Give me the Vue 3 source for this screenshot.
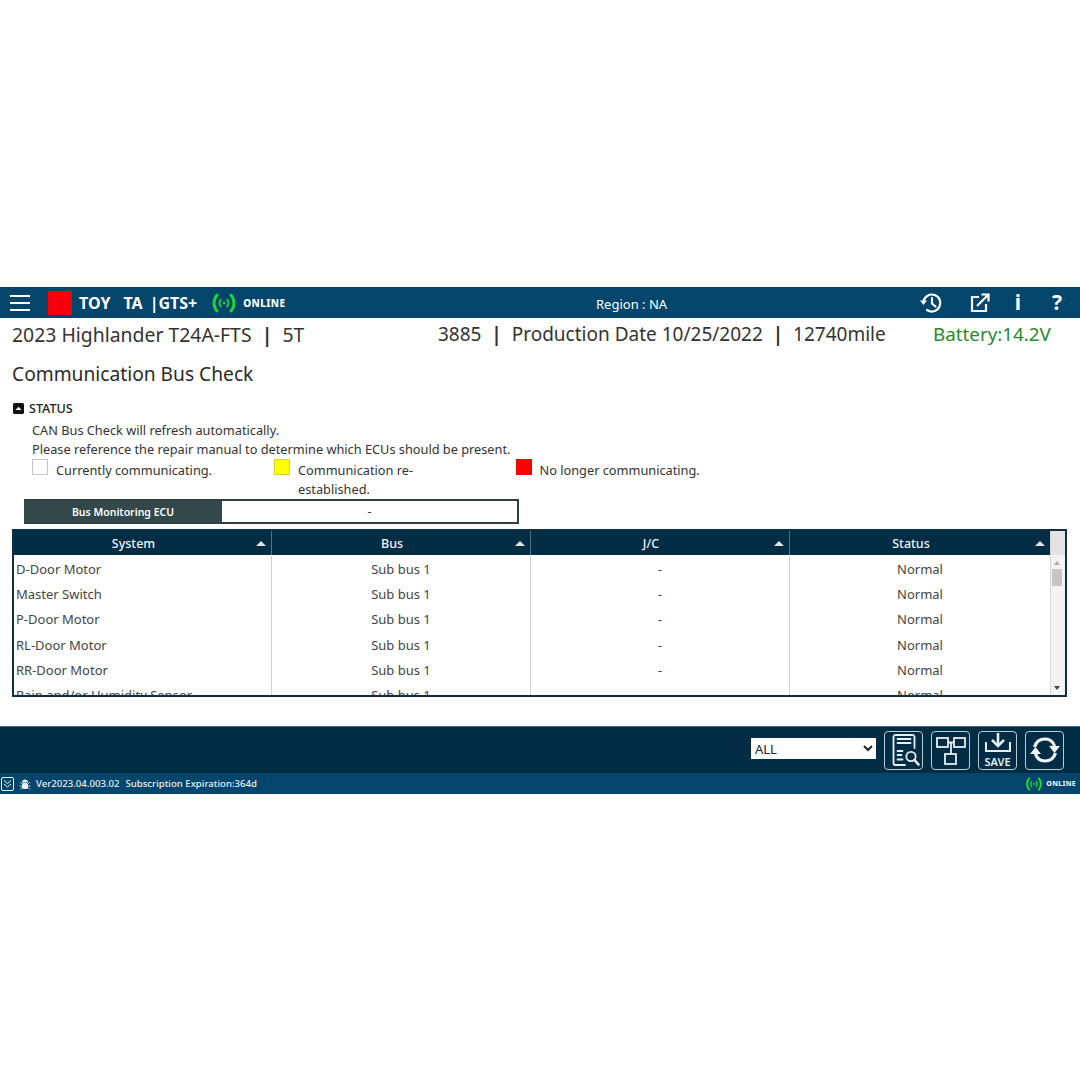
<template>
  <div class="page">
    <header class="topbar">
      <button class="menu-btn" aria-label="Menu"><span></span><span></span><span></span></button>
      <div class="logo-box"></div>
      <div class="brand"><span>TOY</span><span class="brand-gap">TA</span><span class="brand-sep">|GTS+</span></div>
      <svg class="signal" width="26" height="20" viewBox="0 0 26 20" fill="none" stroke="#1fd13a" stroke-width="3" stroke-linecap="round">
        <path d="M6 2C2 6.500 2 13.500 6 18" />
        <path d="M20 2c4 4.500 4 11.500 0 16" />
        <path d="M9.800 6.500c-1.500 2-1.500 5 0 7" stroke-width="1.800" />
        <path d="M16.200 6.500c1.500 2 1.500 5 0 7" stroke-width="1.800" />
        <circle cx="13" cy="10" r="1.400" fill="#1fd13a" stroke="none" />
      </svg>
      <span class="online">ONLINE</span>
      <div class="region">Region : NA</div>
      <div class="top-icons">
        <svg width="24" height="22" viewBox="0 0 24 22" fill="none" stroke="#fff" stroke-width="2.200" stroke-linecap="round">
          <path d="M4.500 9.500A8.500 8.500 0 1 1 8 18" />
          <path d="M1 8.500h7l-3.500 4.500z" fill="#fff" stroke="none" />
          <path d="M13 6v5.500l3.500 3" />
        </svg>
        <svg class="icon-external" width="20" height="20" viewBox="0 0 20 20" fill="none" stroke="#fff" stroke-width="2.200">
          <path d="M9 4H2v14h14v-7" />
          <path d="M7 13 18 2M11.500 1.500h7v7" />
        </svg>
        <span class="glyph-i">i</span>
        <span class="glyph-q">?</span>
      </div>
    </header>

    <div class="vehicle-row">
      <span class="vehicle">2023 Highlander T24A-FTS&nbsp; <b>|</b> &nbsp;5T</span>
      <span class="production">3885&nbsp; <b>|</b> &nbsp;Production Date 10/25/2022&nbsp; <b>|</b> &nbsp;12740mile</span>
      <span class="battery">Battery:14.2V</span>
    </div>

    <h1 class="title">Communication Bus Check</h1>

    <section class="status">
      <div class="status-head">
        <svg width="11" height="11" viewBox="0 0 11 11">
          <rect width="11" height="11" rx="1.500" fill="#111" />
          <path d="M2.500 7 5.500 3.800 8.500 7z" fill="#fff" />
        </svg>
        <span>STATUS</span>
      </div>
      <div class="status-text">
        <p>CAN Bus Check will refresh automatically.</p>
        <p>Please reference the repair manual to determine which ECUs should be present.</p>
      </div>
      <div class="legend">
        <div v-for="item in legend" :key="item.label" class="legend-item">
          <span class="swatch" :class="item.cls"></span>
          <span class="legend-label">{{ item.label }}</span>
        </div>
      </div>
      <div class="monitor">
        <div class="monitor-label">Bus Monitoring ECU</div>
        <div class="monitor-value">-</div>
      </div>
    </section>

    <div class="table-wrap">
      <div class="table-main">
        <div class="thead">
          <div v-for="col in columns" :key="col" class="th">
            <span>{{ col }}</span>
            <i class="sort"></i>
          </div>
        </div>
        <div class="tbody">
          <div v-for="row in rows" :key="row" class="tr">
            <div class="td td-system">{{ row }}</div>
            <div class="td">Sub bus 1</div>
            <div class="td">-</div>
            <div class="td">Normal</div>
          </div>
        </div>
      </div>
      <div class="scrollbar">
        <div class="scroll-corner"></div>
        <div class="scroll-track">
          <i class="arrow up"></i>
          <div class="thumb"></div>
          <i class="arrow down"></i>
        </div>
      </div>
    </div>

    <div class="toolbar">
      <select class="filter">
        <option>ALL</option>
      </select>
      <button class="tool-btn" aria-label="Search report">
        <svg width="32" height="34" viewBox="0 0 32 34" fill="none" stroke="#e6eff3" stroke-width="1.800" stroke-linecap="round">
          <path d="M26.500 15V4a2 2 0 0 0-2-2h-17a2 2 0 0 0-2 2v26a2 2 0 0 0 2 2H17" />
          <path d="M9.500 6h13M9.500 10h13M9.500 18h5M9.500 22h4M9.500 26.500h5" />
          <circle cx="23" cy="23.500" r="4.700" />
          <path d="m26.500 27 4 4.500" stroke-width="2.600" />
        </svg>
      </button>
      <button class="tool-btn" aria-label="Diagram">
        <svg width="34" height="32" viewBox="0 0 34 32" fill="none" stroke="#e6eff3" stroke-width="1.800">
          <rect x="3" y="4" width="11" height="9" />
          <rect x="20" y="4" width="11" height="9" />
          <rect x="11" y="20" width="11" height="10" />
          <path d="M14 8.500h6M17 8.500V20" />
        </svg>
      </button>
      <button class="tool-btn save" aria-label="Save">
        <svg width="28" height="21" viewBox="0 0 28 21" fill="none" stroke="#e6eff3" stroke-width="2">
          <path d="M14 0v12" stroke-width="2.600" />
          <path d="m8 7 6 6 6-6" stroke-width="2.600" />
          <path d="M2 9v9h24V9" />
        </svg>
        <span>SAVE</span>
      </button>
      <button class="tool-btn" aria-label="Refresh">
        <svg width="34" height="32" viewBox="0 0 34 32" fill="none" stroke="#f2f7f9" stroke-width="3.200">
          <path d="M6.500 13C8 8 12 5 17 5c4.500 0 8 2.500 9.500 7" />
          <path d="M27.500 19C26 24 22 27 17 27c-4.500 0-8-2.500-9.500-7" />
          <path d="M32 12H21l5.500 7z" fill="#f2f7f9" stroke="none" />
          <path d="M2 20h11l-5.500-7z" fill="#f2f7f9" stroke="none" />
        </svg>
      </button>
    </div>

    <footer class="statusbar">
      <div class="foot-left">
        <span class="chevron-box">
          <svg width="13" height="14" viewBox="0 0 13 14" fill="none" stroke="#dff" stroke-width="1">
            <rect x=".5" y=".5" width="12" height="13" rx="1.500" />
            <path d="m3 3.500 3.500 3 3.500-3M3 7l3.500 3L10 7" />
          </svg>
        </span>
        <svg class="bug" width="12" height="12" viewBox="0 0 12 12" fill="#e8f2f6">
          <path d="M3 4.500a3 3 0 0 1 6 0z" />
          <rect x="3" y="5" width="6" height="6" rx="1.500" />
          <path d="M1 4l2 2M11 4 9 6M.5 8H3M11.500 8H9M1 11.500l2-2M11 11.500l-2-2" stroke="#e8f2f6" stroke-width=".8" />
        </svg>
        <span class="version">Ver2023.04.003.02</span>
        <span class="subscription">Subscription Expiration:364d</span>
      </div>
      <div class="foot-right">
        <svg width="18" height="14" viewBox="0 0 26 20" fill="none" stroke="#1fd13a" stroke-width="3" stroke-linecap="round">
          <path d="M6 2C2 6.500 2 13.500 6 18" />
          <path d="M20 2c4 4.500 4 11.500 0 16" />
          <path d="M9.800 6.500c-1.500 2-1.500 5 0 7" stroke-width="2" />
          <path d="M16.200 6.500c1.500 2 1.500 5 0 7" stroke-width="2" />
          <circle cx="13" cy="10" r="1.400" fill="#1fd13a" stroke="none" />
        </svg>
        <span>ONLINE</span>
      </div>
    </footer>
  </div>
</template>

<script setup>
const legend = [
  { label: 'Currently communicating.', cls: 'swatch--white' },
  { label: 'Communication re-established.', cls: 'swatch--yellow' },
  { label: 'No longer communicating.', cls: 'swatch--red' },
];

const columns = ['System', 'Bus', 'J/C', 'Status'];

const rows = [
  'D-Door Motor',
  'Master Switch',
  'P-Door Motor',
  'RL-Door Motor',
  'RR-Door Motor',
  'Rain and/or Humidity Sensor',
];
</script>

<style>
html,
body {
  margin: 0;
  background: #fff;
}
</style>

<style scoped>
.page {
  width: 1080px;
  height: 1080px;
  padding-top: 287px;
  box-sizing: border-box;
  font-family: "Noto Sans", "Open Sans", sans-serif;
  color: #333;
  overflow: hidden;
}

.topbar {
  height: 31px;
  background: #04456b;
  display: flex;
  align-items: center;
  color: #fff;
  position: relative;
}

.menu-btn {
  width: 20px;
  margin-left: 10px;
  padding: 0;
  border: 0;
  background: none;
  display: flex;
  flex-direction: column;
  gap: 5px;
}

.menu-btn span {
  height: 2px;
  background: #fff;
}

.logo-box {
  width: 24px;
  height: 24px;
  margin-left: 18px;
  background: #f5000a;
}

.brand {
  margin-left: 7px;
  font-size: 16px;
  font-weight: 700;
  display: flex;
  white-space: nowrap;
}

.brand-gap {
  margin-left: 13px;
}

.brand-sep {
  margin-left: 7px;
}

.signal {
  margin-left: 14px;
}

.online {
  margin-left: 6px;
  font-size: 10px;
  font-weight: 800;
  letter-spacing: 0.4px;
}

.region {
  position: absolute;
  left: 596px;
  top: 8px;
  font-size: 13px;
}

.top-icons {
  margin-left: auto;
  padding-right: 18px;
  display: flex;
  align-items: center;
}

.icon-external {
  margin-left: 27px;
}

.glyph-i,
.glyph-q {
  font-size: 21px;
  font-weight: 700;
  line-height: 1;
}

.glyph-i {
  margin-left: 25px;
}

.glyph-q {
  margin-left: 31px;
}

.vehicle-row {
  height: 32px;
  padding-left: 12px;
  display: flex;
  align-items: center;
  font-size: 19.400px;
  white-space: nowrap;
}

.vehicle {
  width: 426px;
}

.production {
  width: 495px;
  font-size: 19px;
}

.vehicle-row b {
  font-weight: 700;
}

.battery {
  font-size: 18.800px;
  color: #2a8a2a;
}

.title {
  margin: 10px 0 0 12px;
  font-size: 19.200px;
  font-weight: 400;
  line-height: 28px;
  color: #2b2b2b;
}

.status {
  margin-top: 11px;
}

.status-head {
  margin-left: 13px;
  display: flex;
  align-items: center;
  gap: 5px;
  height: 18px;
  font-size: 12.600px;
  font-weight: 500;
  color: #222;
}

.status-text {
  margin: 4px 0 0 32px;
  font-size: 12.750px;
  line-height: 19px;
}

.status-text p {
  margin: 0;
}

.legend {
  margin-left: 32px;
  display: grid;
  grid-template-columns: 242px 241.500px 300px;
  font-size: 12.750px;
  line-height: 19px;
}

.legend-item {
  display: flex;
  gap: 8px;
}

.legend-item .legend-label {
  max-width: 140px;
  padding-top: 2px;
}

.legend-item:first-child .legend-label,
.legend-item:last-child .legend-label {
  max-width: none;
}

.swatch {
  width: 16px;
  height: 16px;
  box-sizing: border-box;
  flex-shrink: 0;
}

.swatch--white {
  border: 1px solid #c4c4c4;
  background: #fff;
}

.swatch--yellow {
  border: 1px solid #d6d62a;
  background: #ffff00;
}

.swatch--red {
  background: #ff0000;
}

.monitor {
  margin-left: 24px;
  width: 495px;
  height: 25px;
  box-sizing: border-box;
  display: flex;
  border: 2px solid #2f3f42;
  border-left: 0;
}

.monitor-label {
  width: 198px;
  background: #34474a;
  color: #fff;
  font-size: 10.500px;
  font-weight: 600;
  display: flex;
  align-items: center;
  justify-content: center;
}

.monitor-value {
  flex: 1;
  font-size: 12px;
  display: flex;
  align-items: center;
  justify-content: center;
}

.table-wrap {
  margin: 5px 0 0 12px;
  width: 1055px;
  height: 168px;
  box-sizing: border-box;
  border: 2px solid #0f2f42;
  display: flex;
  overflow: hidden;
}

.table-main {
  flex: 1;
  min-width: 0;
}

.thead {
  height: 24px;
  background: #032c45;
  display: grid;
  grid-template-columns: 258px 259px 259px 260px;
}

.th {
  position: relative;
  display: flex;
  align-items: center;
  justify-content: center;
  padding-right: 18px;
  color: #eef4f7;
  font-size: 12.500px;
  font-weight: 500;
  border-right: 1px solid #557387;
  box-sizing: border-box;
}

.th:last-child {
  border-right: 0;
}

.sort {
  position: absolute;
  right: 5px;
  top: 10px;
  border-left: 5px solid transparent;
  border-right: 5px solid transparent;
  border-bottom: 5px solid #e0e6ea;
}

.tbody {
  padding-top: 1px;
}

.tr {
  display: grid;
  grid-template-columns: 258px 259px 259px 260px;
  height: 25.300px;
}

.td {
  font-size: 13px;
  display: flex;
  align-items: center;
  justify-content: center;
  border-right: 1px solid #cfd3d5;
  box-sizing: border-box;
  color: #444;
  white-space: nowrap;
}

.td:last-child {
  border-right: 0;
}

.td.td-system {
  justify-content: flex-start;
  padding-left: 2px;
}

.scrollbar {
  width: 15px;
  display: flex;
  flex-direction: column;
  background: #f3f3f3;
  border-left: 1px solid #d6d6d6;
  box-sizing: border-box;
}

.scroll-corner {
  height: 24px;
  background: #e3e3e3;
}

.scroll-track {
  flex: 1;
  position: relative;
}

.arrow {
  position: absolute;
  left: 3px;
  border-left: 3.500px solid transparent;
  border-right: 3.500px solid transparent;
}

.arrow.up {
  top: 6px;
  border-bottom: 4px solid #a8a8a8;
}

.arrow.down {
  bottom: 5px;
  border-top: 4px solid #444;
}

.thumb {
  position: absolute;
  top: 14px;
  left: 1px;
  width: 10px;
  height: 17px;
  background: #c6c6c6;
}

.toolbar {
  margin-top: 29px;
  height: 47px;
  background: #032c45;
  display: flex;
  align-items: center;
  padding-right: 16px;
  justify-content: flex-end;
  gap: 8px;
  box-sizing: border-box;
  border-top: 1px solid #3f6b80;
}

.filter {
  width: 125px;
  height: 21px;
  margin-bottom: 3px;
  border: 0;
  background: #fff;
  color: #222;
  font-family: inherit;
  font-size: 13px;
  padding: 0;
}

.tool-btn {
  width: 39px;
  height: 39px;
  padding: 0;
  background: none;
  border: 1px solid #b7cdd8;
  border-radius: 4px;
  display: flex;
  align-items: center;
  justify-content: center;
  flex-direction: column;
  font-family: inherit;
}

.tool-btn.save span {
  color: #e6eff3;
  font-size: 11px;
  font-weight: 600;
  line-height: 11px;
  margin-top: 2px;
}

.statusbar {
  height: 21px;
  background: #04456b;
  display: flex;
  justify-content: space-between;
  align-items: center;
  color: #eaf3f7;
  font-size: 9.600px;
  font-weight: 500;
}

.foot-left,
.foot-right {
  display: flex;
  align-items: center;
}

.chevron-box {
  display: flex;
  margin-left: 1px;
}

.bug {
  margin-left: 5px;
}

.version {
  margin-left: 5px;
}

.subscription {
  margin-left: 6px;
}

.foot-right {
  gap: 3px;
  padding-right: 4px;
  font-size: 7px;
  font-weight: 800;
  letter-spacing: 0.3px;
}
</style>
